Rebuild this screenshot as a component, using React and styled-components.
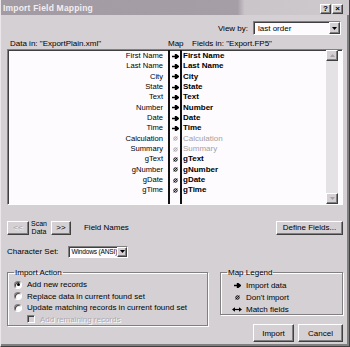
import React from "react";
import styled, { createGlobalStyle } from "styled-components";

const GlobalStyle = createGlobalStyle`
  html, body {
    margin: 0;
    padding: 0;
    background: #d4d0d4;
  }
  body {
    font-family: "Liberation Sans", Arial, sans-serif;
    font-size: 8px;
    color: #000;
  }
`;

const FACE = "#d4d0d4";
const SHADOW = "#808080";
const DARK = "#404040";

const Window = styled.div`
  width: 350px;
  height: 347px;
  box-sizing: border-box;
  background: ${FACE};
  border-left: 1px solid #eae6ea;
  border-right: 1px solid ${DARK};
  border-bottom: 1px solid ${DARK};
  box-shadow: inset -2px -2px 0 ${SHADOW};
  display: flex;
  flex-direction: column;
  overflow: hidden;
`;

const TitleBar = styled.div`
  height: 15px;
  flex: none;
  display: flex;
  align-items: center;
  justify-content: space-between;
  padding: 0 6px 0 2px;
  background: linear-gradient(to right, #a39ba3 0%, #a69ea6 68%, #c9c5c9 70%, #cdc9cd 100%);
`;

const Title = styled.span`
  color: #f2eef2;
  font-weight: bold;
  font-size: 8.5px;
  letter-spacing: 0.2px;
`;

const TitleButtons = styled.div`
  display: flex;
  gap: 1px;
  margin-top: 2px;
`;

const raised = `
  background: ${FACE};
  border: 1px solid;
  border-color: #fff ${DARK} ${DARK} #fff;
  box-shadow: inset -1px -1px 0 ${SHADOW};
`;

const sunken = `
  border: 1px solid;
  border-color: ${SHADOW} #fff #fff ${SHADOW};
  box-shadow: inset 1px 1px 0 ${DARK};
`;

const TitleButton = styled.div`
  ${raised}
  width: 11px;
  height: 10px;
  box-sizing: border-box;
  display: flex;
  align-items: center;
  justify-content: center;
  font-weight: bold;
  font-size: 8px;
  line-height: 1;
  color: #000;
`;

const Content = styled.div`
  flex: 1;
  display: flex;
  flex-direction: column;
  padding: 0 6px 0 6px;
`;

const ViewByRow = styled.div`
  display: flex;
  justify-content: flex-end;
  align-items: center;
  gap: 5px;
  margin-top: 6px;
  padding-right: 2px;
  height: 14px;
`;

const Select = styled.div`
  ${sunken}
  background: #fefbfe;
  width: ${(p) => p.$w}px;
  height: ${(p) => p.$h}px;
  box-sizing: border-box;
  display: flex;
  align-items: center;
  justify-content: space-between;
  padding-left: ${(p) => p.$pad || 4}px;
  font-size: ${(p) => p.$fs || 8}px;
  letter-spacing: ${(p) => p.$ls || 0}px;
  white-space: nowrap;
  overflow: hidden;
`;

const DropButton = styled.div`
  ${raised}
  width: ${(p) => p.$w || 11}px;
  height: 100%;
  box-sizing: border-box;
  flex: none;
  display: flex;
  align-items: center;
  justify-content: center;
`;

const HeaderRow = styled.div`
  display: flex;
  align-items: flex-end;
  height: 14px;
  padding-bottom: 1px;
  box-sizing: border-box;
`;

const HeaderLabel = styled.span`
  width: ${(p) => (p.$w ? `${p.$w}px` : "auto")};
  margin-left: ${(p) => p.$ml || 0}px;
  white-space: nowrap;
`;

const ListBox = styled.div`
  ${sunken}
  background: #fefbfe;
  height: 156px;
  box-sizing: border-box;
  display: flex;
`;

const Column = styled.div`
  width: ${(p) => p.$w}px;
  flex: none;
  padding-top: 1px;
  box-sizing: border-box;
`;

const MapColumn = styled(Column)`
  border-left: 2px solid #111;
  border-right: 2px solid #111;
`;

const NameRow = styled.div`
  height: 10.34px;
  line-height: 10.34px;
  white-space: nowrap;
  text-align: ${(p) => (p.$right ? "right" : "left")};
  padding: ${(p) => (p.$right ? "0 5px 0 0" : "0 0 0 1px")};
  font-weight: ${(p) => (p.$bold && !p.$off ? "bold" : "normal")};
  font-size: ${(p) => (p.$bold ? 8 : 7.6)}px;
  color: ${(p) => (p.$off ? "#a4a0a4" : "#000")};
`;

const MapRow = styled.div`
  height: 10.34px;
  display: flex;
  align-items: center;
  justify-content: center;
`;

const Scrollbar = styled.div`
  width: 12px;
  flex: none;
  display: flex;
  flex-direction: column;
  justify-content: space-between;
  background: #e4e2e4;
`;

const ScrollButton = styled.div`
  ${raised}
  height: 11px;
  box-sizing: border-box;
  display: flex;
  align-items: center;
  justify-content: center;
`;

const ScanRow = styled.div`
  display: flex;
  align-items: center;
  margin-top: 15px;
  height: 15px;
`;

const PushButton = styled.div`
  ${raised}
  width: ${(p) => p.$w}px;
  height: ${(p) => p.$h}px;
  box-sizing: border-box;
  display: flex;
  align-items: center;
  justify-content: center;
  flex: none;
  white-space: nowrap;
  font-size: 8px;
  color: ${(p) => (p.$disabled ? "#a4a0a4" : "#000")};
  text-shadow: ${(p) => (p.$disabled ? "1px 1px 0 #fff" : "none")};
`;

const ScanLabel = styled.div`
  display: flex;
  flex-direction: column;
  font-size: 7px;
  margin: 0 4px 0 2px;
  align-items: center;
  & > span {
    line-height: 8px;
    height: 8px;
  }
`;

const Spacer = styled.div`
  flex: 1;
`;

const Plain = styled.span`
  margin-left: ${(p) => p.$ml || 0}px;
  white-space: nowrap;
`;

const CharRow = styled.div`
  display: flex;
  align-items: center;
  gap: 9px;
  margin-top: 10px;
  height: 13px;
`;

const BottomRow = styled.div`
  display: flex;
  justify-content: space-between;
  margin-top: 10px;
`;

const GroupBox = styled.fieldset`
  margin: 0;
  padding: 2px 0 0 6px;
  width: ${(p) => p.$w}px;
  height: ${(p) => p.$h}px;
  box-sizing: border-box;
  border: 1px solid ${SHADOW};
  box-shadow: inset 1px 1px 0 #fff, 1px 1px 0 #fff;
  display: flex;
  flex-direction: column;
`;

const Legend = styled.legend`
  padding: 0 1px;
  margin-left: 0;
  font-size: 8px;
`;

const OptionRow = styled.div`
  display: flex;
  align-items: center;
  height: 11.7px;
  padding-left: ${(p) => p.$indent || 0}px;
  white-space: nowrap;
  color: ${(p) => (p.$disabled ? "#aeaaae" : "#000")};
  text-shadow: ${(p) => (p.$disabled ? "1px 1px 0 #fff" : "none")};
`;

const Radio = styled.span`
  width: 8px;
  height: 8px;
  border-radius: 50%;
  box-sizing: border-box;
  background: #fff;
  border: 1px solid;
  border-color: ${SHADOW} #fff #fff ${SHADOW};
  box-shadow: inset 1px 1px 0 ${DARK};
  margin-right: 5px;
  display: flex;
  align-items: center;
  justify-content: center;
  flex: none;
  &::after {
    content: "";
    width: 3px;
    height: 3px;
    border-radius: 50%;
    background: ${(p) => (p.$checked ? "#000" : "transparent")};
  }
`;

const Check = styled.span`
  width: 8px;
  height: 8px;
  box-sizing: border-box;
  background: ${FACE};
  ${sunken}
  margin-right: 5px;
  flex: none;
`;

const RightStack = styled.div`
  display: flex;
  flex-direction: column;
  width: 123px;
`;

const LegendItem = styled.div`
  display: flex;
  align-items: center;
  height: 12px;
  padding-left: 4px;
  white-space: nowrap;
`;

const LegendIcon = styled.span`
  width: 12px;
  margin-right: 3px;
  display: flex;
  justify-content: center;
  flex: none;
`;

const ButtonRow = styled.div`
  display: flex;
  justify-content: flex-end;
  gap: 4px;
  margin-top: 9px;
`;

const Arrow = ({ color = "#000" }) => (
  <svg width="7" height="5" viewBox="0 0 7 5">
    <path d="M0 2.5h4.2M3.5 0.2L6.6 2.5 3.5 4.8Z" stroke={color} strokeWidth="1.4" fill={color} />
  </svg>
);

const NoImport = ({ color = "#000" }) => (
  <svg width="5" height="5" viewBox="0 0 5 5">
    <circle cx="2.5" cy="2.5" r="1.7" stroke={color} strokeWidth="1" fill="none" />
    <path d="M0.6 4.4L4.4 0.6" stroke={color} strokeWidth="0.8" />
  </svg>
);

const Match = () => (
  <svg width="10" height="5" viewBox="0 0 10 5">
    <path d="M2.5 2.5h5" stroke="#000" strokeWidth="1.2" />
    <path d="M0 2.5L3 0.3V4.7Z M10 2.5L7 0.3V4.7Z" fill="#000" />
  </svg>
);

const Tri = ({ up, color = "#000" }) => (
  <svg width="5" height="3" viewBox="0 0 5 3">
    <path d={up ? "M0 3L2.5 0 5 3Z" : "M0 0L5 0 2.5 3Z"} fill={color} />
  </svg>
);

const fields = [
  { src: "First Name", dst: "First Name", map: "import" },
  { src: "Last Name", dst: "Last Name", map: "import" },
  { src: "City", dst: "City", map: "import" },
  { src: "State", dst: "State", map: "import" },
  { src: "Text", dst: "Text", map: "import" },
  { src: "Number", dst: "Number", map: "import" },
  { src: "Date", dst: "Date", map: "import" },
  { src: "Time", dst: "Time", map: "import" },
  { src: "Calculation", dst: "Calculation", map: "off" },
  { src: "Summary", dst: "Summary", map: "off" },
  { src: "gText", dst: "gText", map: "skip" },
  { src: "gNumber", dst: "gNumber", map: "skip" },
  { src: "gDate", dst: "gDate", map: "skip" },
  { src: "gTime", dst: "gTime", map: "skip" },
];

export default function App() {
  return (
    <>
      <GlobalStyle />
      <Window>
        <TitleBar>
          <Title>Import Field Mapping</Title>
          <TitleButtons>
            <TitleButton>?</TitleButton>
            <TitleButton>×</TitleButton>
          </TitleButtons>
        </TitleBar>
        <Content>
          <ViewByRow>
            <span>View by:</span>
            <Select $w={88} $h={14}>
              last order
              <DropButton>
                <Tri />
              </DropButton>
            </Select>
          </ViewByRow>

          <HeaderRow>
            <HeaderLabel $w={158} $ml={3}>Data in: "ExportPlain.xml"</HeaderLabel>
            <HeaderLabel $w={24}>Map</HeaderLabel>
            <HeaderLabel>Fields in: "Export.FP5"</HeaderLabel>
          </HeaderRow>

          <ListBox>
            <Column $w={160}>
              {fields.map((f) => (
                <NameRow key={f.src} $right>
                  {f.src}
                </NameRow>
              ))}
            </Column>
            <MapColumn $w={14}>
              {fields.map((f) => (
                <MapRow key={f.src}>
                  {f.map === "import" ? (
                    <Arrow />
                  ) : (
                    <NoImport color={f.map === "off" ? "#a4a0a4" : "#000"} />
                  )}
                </MapRow>
              ))}
            </MapColumn>
            <Column $w={144}>
              {fields.map((f) => (
                <NameRow key={f.dst} $bold $off={f.map === "off"}>
                  {f.dst}
                </NameRow>
              ))}
            </Column>
            <Scrollbar>
              <ScrollButton>
                <Tri up color="#a4a0a4" />
              </ScrollButton>
              <ScrollButton>
                <Tri color="#a4a0a4" />
              </ScrollButton>
            </Scrollbar>
          </ListBox>

          <ScanRow>
            <PushButton $w={22} $h={14} $disabled>
              &lt;&lt;
            </PushButton>
            <ScanLabel>
              <span>Scan</span>
              <span>Data</span>
            </ScanLabel>
            <PushButton $w={20} $h={14}>
              &gt;&gt;
            </PushButton>
            <Plain $ml={13}>Field Names</Plain>
            <Spacer />
            <PushButton $w={67} $h={14}>
              Define Fields...
            </PushButton>
          </ScanRow>

          <CharRow>
            <span>Character Set:</span>
            <Select $w={60} $h={12} $pad={3} $fs={6.6} $ls={-0.2}>
              Windows (ANSI)
              <DropButton $w={10}>
                <Tri />
              </DropButton>
            </Select>
          </CharRow>

          <BottomRow>
            <GroupBox $w={201} $h={58}>
              <Legend>Import Action</Legend>
              <OptionRow>
                <Radio $checked />
                Add new records
              </OptionRow>
              <OptionRow>
                <Radio />
                Replace data in current found set
              </OptionRow>
              <OptionRow>
                <Radio />
                Update matching records in current found set
              </OptionRow>
              <OptionRow $indent={13} $disabled>
                <Check />
                Add remaining records
              </OptionRow>
            </GroupBox>

            <RightStack>
              <GroupBox $w={123} $h={47}>
                <Legend>Map Legend</Legend>
                <LegendItem>
                  <LegendIcon>
                    <Arrow />
                  </LegendIcon>
                  Import data
                </LegendItem>
                <LegendItem>
                  <LegendIcon>
                    <NoImport />
                  </LegendIcon>
                  Don't import
                </LegendItem>
                <LegendItem>
                  <LegendIcon>
                    <Match />
                  </LegendIcon>
                  Match fields
                </LegendItem>
              </GroupBox>
              <ButtonRow>
                <PushButton $w={41} $h={18}>
                  Import
                </PushButton>
                <PushButton $w={45} $h={18}>
                  Cancel
                </PushButton>
              </ButtonRow>
            </RightStack>
          </BottomRow>
        </Content>
      </Window>
    </>
  );
}
